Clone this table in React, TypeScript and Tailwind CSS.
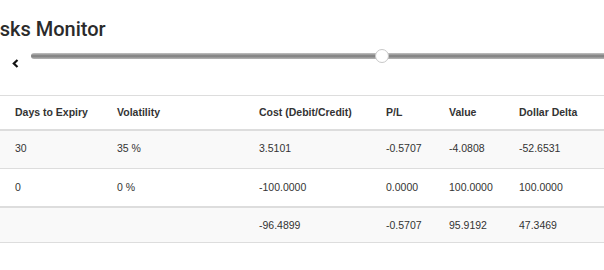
import React from "react";

const cols = "grid grid-cols-[109px_142px_127px_63px_70px_1fr]";

const rows: { cells: string[]; bg: string; h: string; border: string }[] = [
  { cells: ["30", "35 %", "3.5101", "-0.5707", "-4.0808", "-52.6531"], bg: "bg-[#f9f9f9]", h: "h-[38px] pb-[2px]", border: "border-b border-[#dddddd]" },
  { cells: ["0", "0 %", "-100.0000", "0.0000", "100.0000", "100.0000"], bg: "bg-white", h: "h-[39px] pb-[1px]", border: "border-b-2 border-[#dddddd]" },
  { cells: ["", "", "-96.4899", "-0.5707", "95.9192", "47.3469"], bg: "bg-[#f9f9f9]", h: "h-[35px]", border: "border-b border-[#dddddd]" },
];

const headers = ["Days to Expiry", "Volatility", "Cost (Debit/Credit)", "P/L", "Value", "Dollar Delta"];

export default function App() {
  return (
    <div className="w-[604px] h-[270px] overflow-hidden bg-white text-[#333333] font-['Liberation_Sans',Arial,sans-serif]">
      <div className="pt-[15px] h-[45px]">
        <h1 className="ml-[-18px] text-[20px] leading-[28px] font-medium font-['Roboto',sans-serif] text-[#2b2b2b] whitespace-nowrap">
          Risks Monitor
        </h1>
      </div>
      <div className="flex items-start h-[50px]">
        <div className="w-[31px] pl-[12px] pt-[14px]">
          <svg width="7" height="9" viewBox="0 0 7 9">
            <polyline points="5.5,1 1.8,4.5 5.5,8" fill="none" stroke="#111" strokeWidth="2.2" />
          </svg>
        </div>
        <div className="relative flex-1 mt-[8px] mr-[-20px] h-[6px] rounded-l-full bg-gradient-to-b from-[#c4c4c4] via-[#7c7c7c] to-[#b8b8b8]">
          <div className="absolute left-[344px] top-[-4px] w-[14px] h-[14px] rounded-full bg-white border border-[#c8c8c8]" />
        </div>
      </div>
      <div className="text-[10.5px] leading-[15px] border-t border-[#dddddd]">
        <div className={`${cols} h-[35px] items-center border-b-2 border-[#dddddd] font-bold`}>
          {headers.map((h, i) => (
            <div key={i} className={`${i === 0 ? "pl-[15px]" : "pl-2"} whitespace-nowrap`}>
              {h}
            </div>
          ))}
        </div>
        {rows.map((r, ri) => (
          <div key={ri} className={`${cols} ${r.h} items-center ${r.bg} ${r.border}`}>
            {r.cells.map((c, i) => (
              <div key={i} className={`${i === 0 ? "pl-[15px]" : "pl-2"} whitespace-nowrap`}>
                {c}
              </div>
            ))}
          </div>
        ))}
      </div>
    </div>
  );
}
